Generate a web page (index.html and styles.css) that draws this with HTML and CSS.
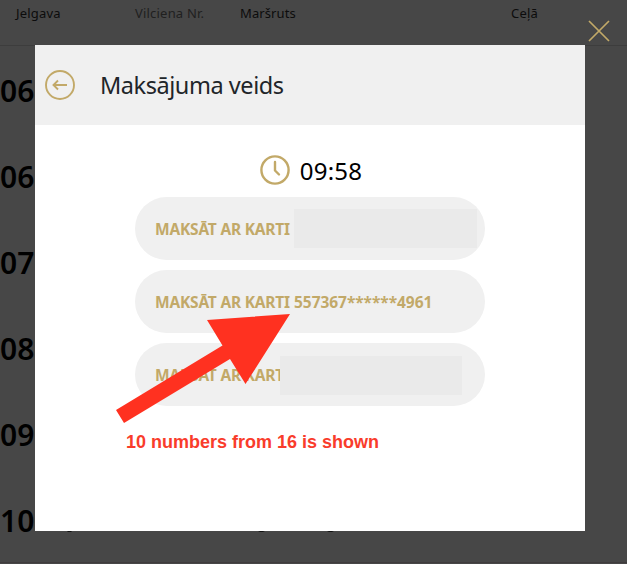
FILE: index.html
```html
<!DOCTYPE html>
<html lang="lv">
<head>
<meta charset="utf-8">
<title>Maksājuma veids</title>
<link rel="stylesheet" href="styles.css">
</head>
<body>
<div class="schedule">
  <header class="columns"><span>Jelgava</span><span class="train">Vilciena Nr.</span><span class="route">Maršruts</span><span>Ceļā</span></header>
  <div class="row">06</div>
  <div class="row">06</div>
  <div class="row">07</div>
  <div class="row">08</div>
  <div class="row">09</div>
  <div class="row">10</div>
</div>
<svg class="close" viewBox="0 0 22 22"><path d="M1 1L21 21M21 1L1 21"/></svg>
<main class="modal">
  <header class="modal-head">
    <svg class="back" viewBox="0 0 30 30"><circle cx="15" cy="15" r="14"/><path d="M22 15H9M13 10.500L8.500 15L13 19.500"/></svg>
    <h1>Maksājuma veids</h1>
  </header>
  <section class="content">
    <div class="timer">
      <svg class="clock" viewBox="0 0 30 30"><circle cx="15" cy="15" r="13.6"/><path d="M15 7V15.500L19 19.500"/></svg>
      <span>09:58</span>
    </div>
    <div class="card"><span>MAKSĀT AR KARTI</span><i class="mask"></i></div>
    <div class="card"><span>MAKSĀT AR KARTI</span><span class="number">557367******4961</span></div>
    <div class="card"><span>MAKSĀT AR KARTI</span><i class="mask mask-low"></i></div>
  </section>
</main>
<svg class="descenders" viewBox="0 0 290 2"><path d="M0 0h5l-1 1h-3zM191 0h7l-2 1h-3zM260 0h7l-2 1h-3z"/></svg>
<svg class="arrow" viewBox="0 0 176 112"><path d="M174 1L91 7L106.500 32.500L0 97L8 110L114 46L129.500 71Z"/></svg>
<p class="note">10 numbers from 16 is shown</p>
</body>
</html>
```
FILE: styles.css
```css
* { box-sizing: border-box; }
body {
  margin: 0;
  width: 627px;
  height: 564px;
  overflow: hidden;
  position: relative;
  background: #474747;
  font-family: "Noto Sans", sans-serif;
}
svg { fill: none; stroke: #c2a968; display: block; flex: none; }
.schedule { height: 563px; overflow: hidden; border-bottom: 1px solid #403c3d; }
.columns {
  height: 46px;
  border-bottom: 1px solid #3d3d3d;
  display: grid;
  grid-template-columns: 119px 105px 271px auto;
  padding: 3px 0 0 16px;
  font-size: 13px;
  line-height: 20px;
  letter-spacing: 0.2px;
  color: #0c0c0c;
}
.train { color: #202020; }
.route { letter-spacing: 0.1px; }
.row {
  height: 86px;
  line-height: 90px;
  font-size: 30px;
  font-weight: 600;
  color: #000;
}
.close { position: absolute; left: 588px; top: 20px; width: 22px; height: 22px; stroke-width: 1.7; }
.modal { position: absolute; left: 35px; top: 45px; width: 550px; height: 486px; background: #fff; }
.modal-head { height: 80px; background: #f0f0f0; display: flex; align-items: center; padding-left: 10px; gap: 25px; }
.back { width: 30px; height: 30px; stroke-width: 1.9; }
h1 { margin: 0; font-size: 23.5px; font-weight: 400; line-height: 32px; letter-spacing: -0.45px; color: #212529; }
.content { display: flex; flex-direction: column; align-items: center; gap: 10px; padding-top: 30px; }
.timer { display: flex; gap: 10px; height: 32px; padding-left: 2px; color: #000; font-size: 24px; font-weight: 400; line-height: 32px; letter-spacing: 0.2px; }
.clock { width: 30px; height: 30px; stroke-width: 2.4; stroke-linecap: round; stroke-linejoin: round; }
.card {
  width: 350px;
  height: 63px;
  border-radius: 32px;
  background: #f0f0f0;
  padding-left: 20px;
  display: flex;
  align-items: center;
  color: #c2a968;
  font-size: 15.5px;
  font-weight: 700;
  white-space: nowrap;
}
.card span { width: 139px; letter-spacing: -0.2px; }
.card .number { letter-spacing: -0.05px; }
.mask { width: 183px; height: 39px; background: #eaeaea; }
.mask-low { width: 182px; margin-left: -14px; margin-top: 1px; z-index: 1; }
.descenders { position: absolute; left: 67px; top: 531px; width: 290px; height: 2px; fill: #111; stroke: none; }
.arrow { position: absolute; left: 115.500px; top: 313px; width: 176px; height: 112px; fill: #ff3120; stroke: none; }
.note {
  position: absolute;
  left: 126px;
  top: 431px;
  margin: 0;
  font: bold 18px/22px "Liberation Sans", sans-serif;
  color: #f93c2b;
  white-space: nowrap;
}
```
